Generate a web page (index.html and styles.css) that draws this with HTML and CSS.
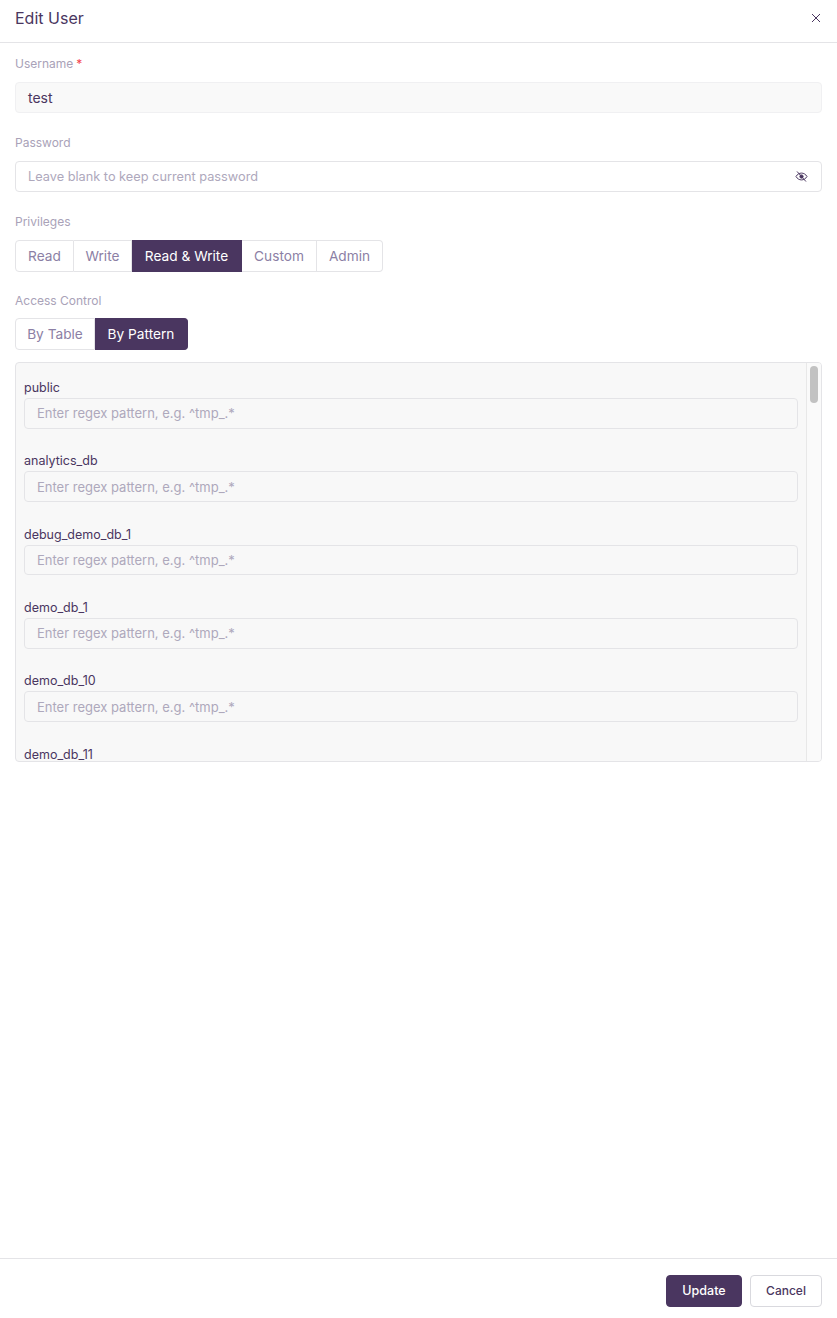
FILE: index.html
```html
<!DOCTYPE html>
<html lang="en">
<head>
  <meta charset="UTF-8" />
  <title>Edit User</title>
  <link rel="stylesheet" href="styles.css">
</head>
<body>
  <div class="drawer">
    <header class="drawer-header">
      <h1>Edit User</h1>
      <svg class="close-icon" viewBox="0 0 16 16" width="16" height="16" fill="none" stroke="currentColor" stroke-width="1">
        <path d="M4 4l8 8M12 4l-8 8" />
      </svg>
    </header>

    <main class="drawer-body">
      <div class="field field-input">
        <label class="field-label">Username<span class="required">*</span></label>
        <div class="input input-disabled">test</div>
      </div>

      <div class="field field-input">
        <label class="field-label">Password</label>
        <div class="input">
          <span class="placeholder placeholder-narrow">Leave blank to keep current password</span>
          <svg class="eye-icon" viewBox="0 0 16 16" width="13" height="13" fill="none" stroke="currentColor" stroke-width="1.2">
            <path d="M1.2 8C2.8 5.3 5.2 3.8 8 3.8s5.2 1.5 6.8 4.2c-1.600 2.700-4 4.200-6.800 4.200S2.800 10.700 1.200 8z" />
            <circle cx="8" cy="8" r="2" fill="currentColor" />
            <path d="M2.500 1.800l11 12.400" />
          </svg>
        </div>
      </div>

      <div class="field">
        <label class="field-label">Privileges</label>
        <div class="btn-group">
          <button class="seg seg-read">Read</button>
          <button class="seg seg-write">Write</button>
          <button class="seg seg-both active">Read &amp; Write</button>
          <button class="seg seg-custom">Custom</button>
          <button class="seg seg-admin">Admin</button>
        </div>
      </div>

      <div class="field field-tight">
        <label class="field-label">Access Control</label>
        <div class="btn-group">
          <button class="seg seg-table">By Table</button>
          <button class="seg seg-pattern active">By Pattern</button>
        </div>
      </div>

      <div class="pattern-panel">
        <div class="pattern-list">
          <div class="pattern-row">
            <div class="pattern-name">public</div>
            <div class="input input-small"><span class="placeholder">Enter regex pattern, e.g. ^tmp_.*</span></div>
          </div>
          <div class="pattern-row">
            <div class="pattern-name">analytics_db</div>
            <div class="input input-small"><span class="placeholder">Enter regex pattern, e.g. ^tmp_.*</span></div>
          </div>
          <div class="pattern-row">
            <div class="pattern-name">debug_demo_db_1</div>
            <div class="input input-small"><span class="placeholder">Enter regex pattern, e.g. ^tmp_.*</span></div>
          </div>
          <div class="pattern-row">
            <div class="pattern-name">demo_db_1</div>
            <div class="input input-small"><span class="placeholder">Enter regex pattern, e.g. ^tmp_.*</span></div>
          </div>
          <div class="pattern-row">
            <div class="pattern-name">demo_db_10</div>
            <div class="input input-small"><span class="placeholder">Enter regex pattern, e.g. ^tmp_.*</span></div>
          </div>
          <div class="pattern-row">
            <div class="pattern-name">demo_db_11</div>
          </div>
        </div>
        <div class="scroll-track"><div class="scroll-thumb"></div></div>
      </div>
    </main>

    <footer class="drawer-footer">
      <button class="btn btn-primary">Update</button>
      <button class="btn">Cancel</button>
    </footer>
  </div>
</body>
</html>
```

FILE: styles.css
```css
html, body {
  height: 100%;
  margin: 0;
  padding: 0;
}
body {
  background: #fff;
  color: #4a3660;
  font-family: Inter, "Liberation Sans", sans-serif;
  font-size: 14px;
}
.drawer {
  height: 100%;
  display: flex;
  flex-direction: column;
}
.drawer-header {
  height: 42px;
  padding: 0 15px;
  display: flex;
  align-items: center;
  justify-content: space-between;
  border-bottom: 1px solid #e4e4e7;
  flex-shrink: 0;
}
.drawer-header h1 {
  margin: -6px 0 0;
  font-size: 16px;
  font-weight: 400;
  line-height: 24px;
}
.close-icon {
  margin: -6px -2px 0 0;
}
.drawer-body {
  flex: 1;
  padding: 10px 15px 0;
  min-height: 0;
}
.field {
  margin-bottom: 18px;
}
.field-input {
  margin-bottom: 19px;
}
.field-tight {
  margin-bottom: 12px;
}
.field-label {
  display: block;
  height: 21px;
  line-height: 22px;
  margin-bottom: 8px;
  font-size: 12px;
  color: #a9a2b8;
}
.field-tight .field-label {
  margin-bottom: 7px;
}
.required {
  color: #f4434f;
  margin-left: 3px;
}
.input {
  box-sizing: border-box;
  height: 31px;
  padding: 0 12px;
  display: flex;
  align-items: center;
  justify-content: space-between;
  background: #fff;
  border: 1px solid #e4e4e7;
  border-radius: 4px;
  font-size: 14px;
}
.input-disabled {
  background: #f9f9f9;
  border-color: #f0f0f2;
}
.placeholder {
  font-size: 13px;
  color: #aea8bc;
}
.placeholder-narrow {
  font-size: 12.75px;
}
.eye-icon {
  color: #4a3660;
  margin-right: 1px;
}
.btn-group {
  display: inline-flex;
  vertical-align: top;
}
.seg {
  height: 32px;
  padding: 0;
  background: #fff;
  border: 1px solid #e4e4e7;
  border-left: 0;
  color: #8c7fa5;
  font-family: inherit;
  font-size: 13.7px;
}
.seg:first-child {
  border-left: 1px solid #e4e4e7;
  border-radius: 4px 0 0 4px;
}
.seg:last-child {
  border-radius: 0 4px 4px 0;
}
.seg.active {
  background: #4a3660;
  border-color: #4a3660;
  color: #fff;
}
.seg-read { width: 59px; }
.seg-write { width: 58px; }
.seg-both { width: 110px; }
.seg-custom { width: 75px; }
.seg-admin { width: 66px; }
.seg-table { width: 80px; }
.seg-pattern { width: 93px; }
.pattern-panel {
  box-sizing: border-box;
  height: 400px;
  display: flex;
  background: #f8f8f8;
  border: 1px solid #e4e4e7;
  border-radius: 4px;
  overflow: hidden;
}
.pattern-list {
  flex: 1;
  min-width: 0;
  padding: 15px 8px 0;
  overflow: hidden;
}
.pattern-row {
  height: 73.33px;
}
.pattern-name {
  height: 20px;
  line-height: 20px;
  font-size: 12.5px;
}
.input-small {
  height: 30.67px;
  background: #f8f8f8;
}
.scroll-track {
  box-sizing: border-box;
  width: 15px;
  flex-shrink: 0;
  padding: 3px;
  background: #fafafa;
  border-left: 1px solid #e8e8e8;
}
.scroll-thumb {
  height: 37px;
  background: #c2c2c2;
  border-radius: 4px;
}
.drawer-footer {
  height: 60px;
  padding: 16px 15px 0;
  box-sizing: border-box;
  display: flex;
  justify-content: flex-end;
  gap: 8px;
  border-top: 1px solid #e4e4e7;
  flex-shrink: 0;
}
.btn {
  height: 32px;
  width: 72px;
  padding: 0 0 1px;
  background: #fff;
  border: 1px solid #d9d9de;
  border-radius: 4px;
  color: #4a3660;
  font-family: inherit;
  font-size: 12px;
  font-weight: 500;
}
.btn-primary {
  width: 76px;
  background: #4a3660;
  border-color: #4a3660;
  color: #fff;
  font-size: 12.5px;
}
```
